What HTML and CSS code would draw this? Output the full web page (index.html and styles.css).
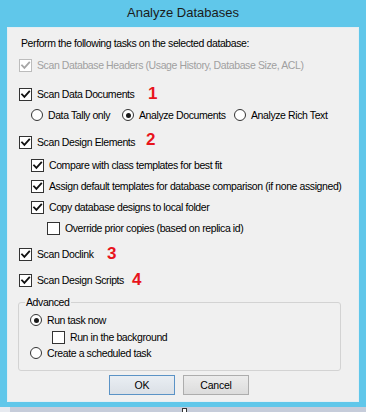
FILE: index.html
```html
<!DOCTYPE html>
<html>
<head>
<meta charset="utf-8">
<title>Analyze Databases</title>
<link rel="stylesheet" href="styles.css">
</head>
<body>
<div class="window">
  <div class="titlebar">Analyze Databases</div>
  <div class="client">
    <div class="row r-head">Perform the following tasks on the selected database:</div>

    <div class="row r-dis disabled">
      <span class="cb"><svg viewBox="0 0 11 11"><path d="M2 5.4 L4.4 7.9 L9.2 2.6"/></svg></span>
      <span class="lbl">Scan Database Headers (Usage History, Database Size, ACL)</span>
    </div>

    <div class="row r-sdd">
      <span class="cb"><svg viewBox="0 0 11 11"><path d="M2 5.4 L4.4 7.9 L9.2 2.6"/></svg></span>
      <span class="lbl">Scan Data Documents</span>
      <span class="num n1">1</span>
    </div>

    <div class="row r-opt lvl1">
      <span class="opt opt-a"><span class="rb"></span><span class="lbl">Data Tally only</span></span>
      <span class="opt opt-b"><span class="rb on"></span><span class="lbl">Analyze Documents</span></span>
      <span class="opt"><span class="rb"></span><span class="lbl">Analyze Rich Text</span></span>
    </div>

    <div class="row r-sde">
      <span class="cb"><svg viewBox="0 0 11 11"><path d="M2 5.4 L4.4 7.9 L9.2 2.6"/></svg></span>
      <span class="lbl">Scan Design Elements</span>
      <span class="num n2">2</span>
    </div>

    <div class="row r-cmp lvl1">
      <span class="cb"><svg viewBox="0 0 11 11"><path d="M2 5.4 L4.4 7.9 L9.2 2.6"/></svg></span>
      <span class="lbl">Compare with class templates for best fit</span>
    </div>

    <div class="row r-sub lvl1">
      <span class="cb"><svg viewBox="0 0 11 11"><path d="M2 5.4 L4.4 7.9 L9.2 2.6"/></svg></span>
      <span class="lbl">Assign default templates for database comparison (if none assigned)</span>
    </div>

    <div class="row r-sub lvl1">
      <span class="cb"><svg viewBox="0 0 11 11"><path d="M2 5.4 L4.4 7.9 L9.2 2.6"/></svg></span>
      <span class="lbl">Copy database designs to local folder</span>
    </div>

    <div class="row r-sub lvl2">
      <span class="cb"></span>
      <span class="lbl">Override prior copies (based on replica id)</span>
    </div>

    <div class="row r-top">
      <span class="cb"><svg viewBox="0 0 11 11"><path d="M2 5.4 L4.4 7.9 L9.2 2.6"/></svg></span>
      <span class="lbl">Scan Doclink</span>
      <span class="num n3">3</span>
    </div>

    <div class="row r-top">
      <span class="cb"><svg viewBox="0 0 11 11"><path d="M2 5.4 L4.4 7.9 L9.2 2.6"/></svg></span>
      <span class="lbl">Scan Design Scripts</span>
      <span class="num n4">4</span>
    </div>

    <div class="group">
      <span class="legend">Advanced</span>
      <div class="row">
        <span class="rb on"></span><span class="lbl">Run task now</span>
      </div>
      <div class="row r-bg">
        <span class="cb"></span><span class="lbl">Run in the background</span>
      </div>
      <div class="row">
        <span class="rb"></span><span class="lbl">Create a scheduled task</span>
      </div>
    </div>

    <div class="buttons">
      <button class="btn btn-default">OK</button>
      <button class="btn">Cancel</button>
    </div>
  </div>
  <div class="frame-bottom"></div>
</div>
<div class="desk">
  <span class="desk-left"></span>
  <span class="cursor"></span>
</div>
</body>
</html>
```

FILE: styles.css
```css
html, body {
  margin: 0;
  padding: 0;
}

body {
  width: 366px;
  height: 412px;
  overflow: hidden;
  background: #c6ccda;
  font-family: "Liberation Sans", Arial, sans-serif;
}

.window {
  width: 366px;
  height: 407px;
  background: #60c7ea;
  display: flex;
  flex-direction: column;
}

.titlebar {
  height: 27px;
  line-height: 26px;
  text-align: center;
  font-size: 13px;
  color: #1b1b1b;
  flex: none;
}

.client {
  margin: 0 7px;
  height: 375px;
  box-sizing: border-box;
  background: #f0f0f0;
  box-shadow: inset 0 0 0 1px #e4eef3;
  padding: 8px 0 0 12px;
  display: flex;
  flex-direction: column;
  font-size: 10.5px;
  letter-spacing: -0.4px;
  color: #000;
  flex: none;
}

.frame-bottom {
  flex: 1;
}

.row {
  height: 16px;
  display: flex;
  align-items: center;
  flex: none;
  position: relative;
  white-space: nowrap;
}

.r-head { margin-left: 2px; }
.r-dis { margin-top: 6px; }
.r-sdd { margin-top: 13px; }
.r-opt { margin-top: 5px; }
.r-sde { margin-top: 11px; }
.r-cmp { margin-top: 7px; }
.r-sub { margin-top: 5px; }
.r-top { margin-top: 10px; }

.lvl1 { padding-left: 12px; }
.lvl2 { padding-left: 28px; }

.cb {
  width: 13px;
  height: 13px;
  box-sizing: border-box;
  border: 1px solid #333;
  background: #fff;
  flex: none;
  display: flex;
}

.cb svg {
  width: 11px;
  height: 11px;
  fill: none;
  stroke: #111;
  stroke-width: 1.8;
  stroke-linecap: square;
  stroke-linejoin: miter;
}

.cb + .lbl { margin-left: 5px; }

.rb {
  width: 12px;
  height: 12px;
  box-sizing: border-box;
  border: 1px solid #333;
  border-radius: 50%;
  background: #fff;
  flex: none;
  display: flex;
  align-items: center;
  justify-content: center;
}

.rb.on::after {
  content: "";
  width: 5px;
  height: 5px;
  border-radius: 50%;
  background: #1a1a1a;
}

.rb + .lbl { margin-left: 5px; }

.opt {
  display: flex;
  align-items: center;
  flex: none;
}

.opt-a { width: 91px; }
.opt-b { width: 112px; }

.disabled { color: #a0a0a0; }
.disabled .cb { border-color: #bcbcbc; }
.disabled .cb svg { stroke: #a6a6a6; }

.num {
  position: absolute;
  top: 0;
  line-height: 16px;
  font-size: 17px;
  font-weight: bold;
  color: #e8141c;
  letter-spacing: 0;
}

.n1 { left: 129px; }
.n2 { left: 127px; top: -2px; }
.n3 { left: 88px; }
.n4 { left: 113px; }

.group {
  position: relative;
  margin-top: 14px;
  margin-left: -1px;
  width: 323px;
  box-sizing: border-box;
  border: 1px solid #d3d3d3;
  border-radius: 3px;
  padding: 9px 0 9px 11px;
  display: flex;
  flex-direction: column;
  flex: none;
}

.legend {
  position: absolute;
  top: -8px;
  left: 6px;
  padding: 0 1px;
  line-height: 14px;
  background: #f0f0f0;
}

.r-bg {
  margin-top: 1px;
  padding-left: 22px;
}

.buttons {
  margin-top: 4px;
  margin-left: 90px;
  display: flex;
  gap: 8px;
  flex: none;
}

.btn {
  width: 66px;
  height: 20px;
  box-sizing: border-box;
  margin: 0;
  padding: 0;
  border: 1px solid #adadad;
  background: linear-gradient(#ececec, #dcdcdc);
  font-family: "Liberation Sans", Arial, sans-serif;
  font-size: 10.5px;
  letter-spacing: -0.2px;
  color: #000;
}

.btn-default {
  border-color: #5b93c6;
  background: linear-gradient(#e9eef3, #dbe0e6);
}

.desk {
  height: 5px;
  display: flex;
}

.desk-left {
  width: 10px;
  background: #e7eaf0;
}

.cursor {
  margin-left: 172px;
  margin-top: 1px;
  width: 3px;
  height: 4px;
  border: 1px solid #333;
  border-bottom: 0;
  background: #fff;
}
```
